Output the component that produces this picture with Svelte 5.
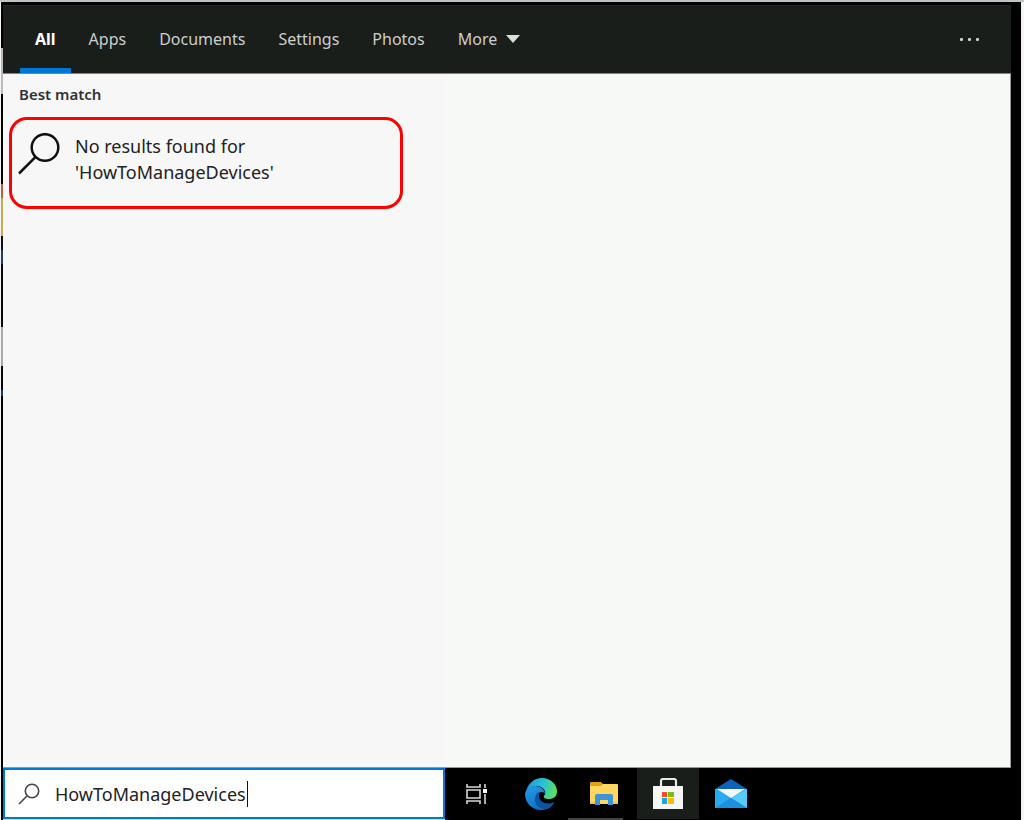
<script>
  const tabs = ['All', 'Apps', 'Documents', 'Settings', 'Photos'];
  let active = $state('All');
  let query = $state('HowToManageDevices');
</script>

<div class="screen">
  <div class="desktop-edge"></div>
  <div class="main">
    <section class="panel">
      <nav aria-label="Search categories">
        {#each tabs as tab}
          <button class="tab" class:active={active === tab} onclick={() => (active = tab)}>{tab}</button>
        {/each}
        <button class="tab more">
          More
          <svg width="14" height="8" viewBox="0 0 14 8" aria-hidden="true"><path d="M0 0h14L7 8z" fill="#dcdedc" /></svg>
        </button>
        <button class="options" aria-label="Options">
          <svg width="20" height="4" viewBox="0 0 20 4" aria-hidden="true">
            <g fill="#cfd1cf"><rect x="0" y="0" width="3" height="3" rx="1" /><rect x="8" y="0" width="3" height="3" rx="1" /><rect x="16" y="0" width="3" height="3" rx="1" /></g>
          </svg>
        </button>
      </nav>
      <div class="content">
        <div class="results">
          <h2>Best match</h2>
          <button class="result">
            <svg width="42" height="42" viewBox="0 0 42 42" aria-hidden="true">
              <g fill="none" stroke="#111" stroke-width="2.5"><circle cx="27" cy="14.5" r="13.3" /><path d="M17.6 23.9 1 40.5" /></g>
            </svg>
            <span>No results found for<br />'{query}'</span>
          </button>
        </div>
        <div class="preview"></div>
      </div>
    </section>

    <footer class="taskbar">
      <label class="search">
        <svg width="22" height="22" viewBox="0 0 22 22" aria-hidden="true">
          <g fill="none" stroke="#444" stroke-width="1.6"><circle cx="14" cy="8" r="6.7" /><path d="M9.2 12.8 1 21" /></g>
        </svg>
        <input type="text" aria-label="Search" bind:value={query} />
        <span class="caret"></span>
      </label>
      <div class="apps">
        <button class="app" aria-label="Task View">
          <svg width="22" height="20" viewBox="0 0 22 20" aria-hidden="true">
            <g fill="none" stroke="#d8d8d8" stroke-width="1.6"><path d="M1 0v3h13V0M1 20v-3h13v3M1 6h13v8H1zM19 0v4M19 10v10" /></g>
            <path fill="#fff" d="M17 5h4v4h-4z" />
          </svg>
        </button>
        <button class="app" aria-label="Microsoft Edge">
          <svg width="32" height="32" viewBox="0 0 32 32" aria-hidden="true">
            <defs>
              <linearGradient id="edge-top" x1="2" y1="8" x2="31" y2="18" gradientUnits="userSpaceOnUse"><stop offset="0" stop-color="#219bdd" /><stop offset=".5" stop-color="#2cc2d2" /><stop offset="1" stop-color="#62e64b" /></linearGradient>
              <linearGradient id="edge-left" x1="5" y1="10" x2="15" y2="31" gradientUnits="userSpaceOnUse"><stop offset="0" stop-color="#2495df" /><stop offset="1" stop-color="#0872cb" /></linearGradient>
            </defs>
            <path fill="url(#edge-top)" d="M1 15C2 6 9 0 17 0c9 0 15 7 15 13 0 6-4 8-8 8-4 0-6-1-5-3 4-5-2-10-8-10-5 0-9 3-10 7z" />
            <path fill="url(#edge-left)" d="M0 16C1 10 6 8 10 8c6 0 10 4 10 8-1-2-3-2-4-2-4 1-5 5-3 9 3 6 11 7 16 2-3 5-8 7-13 7C7 32 0 25 0 16z" />
            <path fill="#0c549f" d="M14 14c-4 2-5 8-3 12 2 4 6 5 9 5 5-1 7-4 9-6 0-1-1-1-2 0-7 2-13-2-13-7 0-2 0-3 0-4z" />
          </svg>
        </button>
        <button class="app running" aria-label="File Explorer">
          <svg width="28" height="26" viewBox="0 0 28 26" aria-hidden="true">
            <path fill="#e0a015" d="M0 2q0-1 1-1h10l2 2v4H0z" />
            <path fill="#ffd65f" d="M0 5h11l2-2h14q1 0 1 1v19H0z" />
            <path fill="#3e95d6" d="M5 15q0-2 2-2h14q2 0 2 2v9h-5v-5h-8v5H5z" />
            <path fill="#f3c14e" d="M0 21h5v2H0zM23 21h5v2h-5z" />
          </svg>
        </button>
        <button class="app selected" aria-label="Microsoft Store">
          <svg width="30" height="32" viewBox="0 0 30 32" aria-hidden="true">
            <path d="M8 9V3q0-2 2-2h11q2 0 2 2v6" fill="none" stroke="#e8e8e8" stroke-width="2.2" />
            <path fill="#f5f5f5" d="M0 8h30v23H0z" />
            <path fill="#f15022" d="M9 14h5v5H9z" /><path fill="#80ba13" d="M15 14h6v5h-6z" />
            <path fill="#18a4e8" d="M9 20h5v6H9z" /><path fill="#ffb900" d="M15 20h6v6h-6z" />
          </svg>
        </button>
        <button class="app" aria-label="Mail">
          <svg width="32" height="30" viewBox="0 0 32 30" aria-hidden="true">
            <path fill="#0b64b7" d="M0 10 16 0l16 10v6H0z" />
            <path fill="#28aaf0" d="M0 10h32v19H0z" />
            <path fill="#54ccf5" d="m32 10-16 9 16 10z" />
            <path fill="#1b90df" d="m0 29 16-10 16 10z" />
            <path fill="#f5f7f8" d="M2 10h28L16 19z" />
          </svg>
        </button>
      </div>
    </footer>
  </div>
</div>

<style>
  :global(body) { background: #fff; }
  .screen, .screen * { box-sizing: border-box; }
  .screen {
    display: flex;
    min-height: 100vh;
    padding: 1px 3px 0 1px;
    background: linear-gradient(#bfc3c3, #bfc3c3) top / 100% 2px no-repeat, #f5f5f5;
    font-family: 'Noto Sans', 'Open Sans', sans-serif;
  }
  button { border: 0; padding: 0; background: none; font: inherit; color: inherit; }
  .desktop-edge {
    flex: none;
    width: 2px;
    margin-top: 1px;
    background: linear-gradient(#000 46px, #bbb 46px 92px, #000 92px 182px, #b65f45 182px 196px, #c8aa4c 196px 234px, #0c1218 234px 248px, #223a70 248px 262px, #05090c 262px 325px, #aaa 325px 364px, #05090c 364px 388px, #223a70 388px 394px, #000 394px);
  }
  .main { flex: 1; display: flex; flex-direction: column; margin-top: 1px; padding-top: 3px; background: #000; }
  .panel { flex: 1; display: flex; flex-direction: column; margin-right: 10px; }
  nav {
    display: flex;
    height: 69px;
    padding: 0 31px 0 17px;
    background: #1a1e1a;
    border-top: 1px solid #282523;
    border-bottom: 1px solid #7d837d;
    font-size: 16px;
    color: #cccecc;
  }
  .tab { padding: 4px 15px 0 18px; border-bottom: 5px solid transparent; }
  .tab.active { padding: 4px 15px 0; border-color: #0078d7; color: #fff; font-weight: 700; }
  .more { display: flex; align-items: center; gap: 9px; }
  .options { display: flex; align-items: center; margin-left: auto; }
  .content { flex: 1; display: grid; grid-template-columns: 442px 1fr; border-right: 1px solid #999; border-bottom: 1px solid #999; }
  .results { padding: 10px 6px; background: #f7f7f7; }
  .preview { background: #f7f9f6; }
  h2 { margin: 0 0 12px; padding-left: 10px; font-size: 15px; line-height: 21px; font-weight: 600; color: #333; }
  .result {
    display: flex;
    align-items: flex-start;
    gap: 15px;
    width: 394px;
    height: 92px;
    padding: 13px 6px;
    border: 3px solid #f00;
    border-radius: 18px;
    font-size: 18px;
    line-height: 26px;
    text-align: left;
    color: #222;
  }
  .result svg { flex: none; }
  .taskbar { display: flex; height: 52px; }
  .search {
    display: flex;
    align-items: center;
    width: 442px;
    height: 51px;
    padding-left: 13px;
    background: #fff;
    border: 2px solid #0078d7;
    box-shadow: 0 1px #d8d8d8;
  }
  .search input {
    field-sizing: content;
    max-width: 380px;
    margin-left: 15px;
    padding: 0;
    border: 0;
    outline: 0;
    font: inherit;
    font-size: 18px;
    color: #222;
  }
  .caret { width: 1px; height: 26px; margin-left: 1px; background: #111; }
  .apps { display: flex; }
  .app { display: grid; place-items: center; width: 64px; height: 51px; }
  .running { width: 69px; height: 52px; margin-left: -5px; padding-left: 3px; background: linear-gradient(#444, #444) left bottom / 55px 2px no-repeat; }
  .selected { width: 62px; background: #1a1e1a; }
</style>
